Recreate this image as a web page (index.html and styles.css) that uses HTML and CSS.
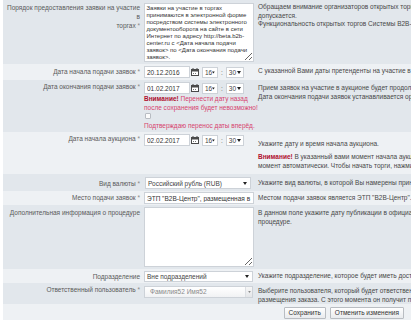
FILE: index.html
```html
<!DOCTYPE html>
<html lang="ru">
<head>
<meta charset="utf-8">
<link rel="stylesheet" href="styles.css">
</head>
<body>
<div class="form">
  <div class="row dark r1">
    <div class="label">Порядок предоставления заявки на участие в<br>торгах <span class="req">*</span></div>
    <div class="ctl"><textarea class="ta ta1">Заявки на участие в торгах
принимаются в электронной форме
посредством системы электронного
документооборота на сайте в сети
Интернет по адресу http://beta.b2b-
center.ru с &lt;Дата начала подачи
заявок&gt; по &lt;Дата окончания подачи
заявок&gt;.</textarea></div>
    <div class="help r1h">
      <div>Обращаем внимание организаторов открытых торгов, что изменение сроков</div>
      <div>допускается.</div>
      <div>Функциональность открытых торгов Системы B2B-Центр</div>
    </div>
  </div>

  <div class="row light r2">
    <div class="label">Дата начала подачи заявок <span class="req">*</span></div>
    <div class="ctl">
      <div class="datetime">
        <input class="inp date" type="text" value="20.12.2016">
        <svg class="cal" width="8" height="8" viewBox="0 0 8 8"><rect x="0.5" y="1.5" width="7" height="6" fill="#fff" stroke="#4a4a4a"/><rect x="0" y="1" width="8" height="2.5" fill="#4a4a4a"/><rect x="1.5" y="0" width="1" height="2" fill="#4a4a4a"/><rect x="5.5" y="0" width="1" height="2" fill="#4a4a4a"/><rect x="2" y="5" width="1" height="1" fill="#777"/><rect x="4" y="5" width="1" height="1" fill="#777"/></svg>
        <span class="sel small"><span>16</span><svg class="arr" width="4" height="3" viewBox="0 0 4 3"><path d="M0 0H4L2 3Z" fill="#222"/></svg></span>
        <span class="colon">:</span>
        <span class="sel small w30"><span>30</span><svg class="arr" width="4" height="3" viewBox="0 0 4 3"><path d="M0 0H4L2 3Z" fill="#222"/></svg></span>
      </div>
    </div>
    <div class="help"><div>С указанной Вами даты претенденты на участие в торгах могут</div></div>
  </div>

  <div class="row dark r3">
    <div class="label">Дата окончания подачи заявок <span class="req">*</span></div>
    <div class="ctl">
      <div class="datetime">
        <input class="inp date" type="text" value="01.02.2017">
        <svg class="cal" width="8" height="8" viewBox="0 0 8 8"><rect x="0.5" y="1.5" width="7" height="6" fill="#fff" stroke="#4a4a4a"/><rect x="0" y="1" width="8" height="2.5" fill="#4a4a4a"/><rect x="1.5" y="0" width="1" height="2" fill="#4a4a4a"/><rect x="5.5" y="0" width="1" height="2" fill="#4a4a4a"/><rect x="2" y="5" width="1" height="1" fill="#777"/><rect x="4" y="5" width="1" height="1" fill="#777"/></svg>
        <span class="sel small"><span>16</span><svg class="arr" width="4" height="3" viewBox="0 0 4 3"><path d="M0 0H4L2 3Z" fill="#222"/></svg></span>
        <span class="colon">:</span>
        <span class="sel small w30"><span>30</span><svg class="arr" width="4" height="3" viewBox="0 0 4 3"><path d="M0 0H4L2 3Z" fill="#222"/></svg></span>
      </div>
      <div class="warn"><b>Внимание!</b> Перенести дату назад<br>после сохранения будет невозможно!</div>
      <div class="chkline"><span class="chk"></span></div>
      <div class="warn">Подтверждаю перенос даты вперёд.</div>
    </div>
    <div class="help">
      <div>Прием заявок на участие в аукционе будет продолжаться до</div>
      <div>Дата окончания подачи заявок устанавливается организатором</div>
    </div>
  </div>

  <div class="row light r4">
    <div class="label">Дата начала аукциона <span class="req">*</span></div>
    <div class="ctl">
      <div class="datetime">
        <input class="inp date" type="text" value="02.02.2017">
        <svg class="cal" width="8" height="8" viewBox="0 0 8 8"><rect x="0.5" y="1.5" width="7" height="6" fill="#fff" stroke="#4a4a4a"/><rect x="0" y="1" width="8" height="2.5" fill="#4a4a4a"/><rect x="1.5" y="0" width="1" height="2" fill="#4a4a4a"/><rect x="5.5" y="0" width="1" height="2" fill="#4a4a4a"/><rect x="2" y="5" width="1" height="1" fill="#777"/><rect x="4" y="5" width="1" height="1" fill="#777"/></svg>
        <span class="sel small"><span>16</span><svg class="arr" width="4" height="3" viewBox="0 0 4 3"><path d="M0 0H4L2 3Z" fill="#222"/></svg></span>
        <span class="colon">:</span>
        <span class="sel small w30"><span>30</span><svg class="arr" width="4" height="3" viewBox="0 0 4 3"><path d="M0 0H4L2 3Z" fill="#222"/></svg></span>
      </div>
    </div>
    <div class="help r4h">
      <p>Укажите дату и время начала аукциона.</p>
      <p><b class="attn">Внимание!</b> В указанный вами момент начала аукциона торги не начнутся в этот</p>
      <p class="cont">момент автоматически. Чтобы начать торги, нажмите кнопку</p>
    </div>
  </div>

  <div class="row dark r5">
    <div class="label">Вид валюты <span class="req">*</span></div>
    <div class="ctl"><span class="sel wide"><span>Российский рубль (RUB)</span><svg class="arr" width="4" height="3" viewBox="0 0 4 3"><path d="M0 0H4L2 3Z" fill="#222"/></svg></span></div>
    <div class="help"><div>Укажите вид валюты, в которой Вы намерены принимать предложения</div></div>
  </div>

  <div class="row light r6">
    <div class="label">Место подачи заявок <span class="req">*</span></div>
    <div class="ctl"><input class="inp full" type="text" value="ЭТП &quot;B2B-Центр&quot;, размещенная в сети Интернет"></div>
    <div class="help"><div>Местом подачи заявок является ЭТП "B2B-Центр".</div></div>
  </div>

  <div class="row dark r7">
    <div class="label">Дополнительная информация о процедуре</div>
    <div class="ctl"><textarea class="ta ta2"></textarea></div>
    <div class="help">
      <div>В данном поле укажите дату публикации в официальном печатном издании</div>
      <div>процедуре.</div>
    </div>
  </div>

  <div class="row light r8">
    <div class="label">Подразделение</div>
    <div class="ctl"><span class="sel wide dept"><span>Вне подразделений</span><svg class="arr" width="4" height="3" viewBox="0 0 4 3"><path d="M0 0H4L2 3Z" fill="#222"/></svg></span></div>
    <div class="help"><div>Укажите подразделение, которое будет иметь доступ к процедуре</div></div>
  </div>

  <div class="row dark r9">
    <div class="label">Ответственный пользователь <span class="req">*</span></div>
    <div class="ctl"><span class="combo"><span class="combo-text">Фамилия52 Имя52</span><span class="combo-btn"><svg width="3" height="2" viewBox="0 0 4 3"><path d="M0 0H4L2 3Z" fill="#888"/></svg></span></span></div>
    <div class="help">
      <div>Выберите пользователя, который будет ответственным за проведение</div>
      <div>размещения заказа. С этого момента он получит права на процедуру</div>
    </div>
  </div>

  <div class="actions light">
    <button class="btn" type="button">Сохранить</button>
    <button class="btn" type="button">Отменить изменения</button>
  </div>
</div>
</body>
</html>
```
FILE: styles.css
```css
html, body {
  margin: 0;
  padding: 0;
  background: #fff;
  overflow: hidden;
}

body {
  width: 411px;
  height: 320px;
  font-family: "Liberation Sans", Arial, sans-serif;
  font-size: 6.5px;
  color: #444;
}

.form {
  margin-left: 3px;
}

.row {
  display: grid;
  grid-template-columns: 138px 114px minmax(0, 1fr);
}

.dark { background: #e2e7ec; }
.light { background: #eef1f4; }

.label {
  text-align: right;
  padding: 3px 1px 0 0;
  line-height: 9px;
  color: #5a5a5a;
}

.req { color: #888; }

.ctl {
  padding: 2px 0 2px 3px;
}

.help {
  padding: 3px 0 0 3px;
  line-height: 8.5px;
  white-space: nowrap;
  overflow: hidden;
  color: #484848;
}

.help p { margin: 0; }

/* text areas */
.ta {
  display: block;
  box-sizing: border-box;
  width: 110px;
  margin: 0;
  padding: 1px 1px 1px 1.5px;
  border: 1px solid #cdd2d8;
  background: #fff;
  font-family: "Liberation Sans", Arial, sans-serif;
  font-size: 6px;
  line-height: 7px;
  color: #333;
  white-space: pre;
  overflow: hidden;
  resize: both;
}

.r1 .ctl { padding: 3px 0 2px 3px; }
.ta1 { height: 59px; }
.ta2 { height: 60px; }

/* inputs */
.inp {
  box-sizing: border-box;
  height: 12px;
  margin: 0;
  padding: 0 2px;
  border: 1px solid #cdd2d8;
  background: #fff;
  font-family: "Liberation Sans", Arial, sans-serif;
  font-size: 6.5px;
  color: #333;
  outline: none;
}

.date { width: 46px; }
.full { width: 110px; display: block; }

.datetime {
  display: flex;
  align-items: center;
  height: 12px;
}

.cal {
  display: block;
  margin: 0 3px 0 1px;
}

.colon {
  margin: 0 3px;
  color: #666;
}

/* selects */
.sel {
  box-sizing: border-box;
  display: flex;
  align-items: center;
  justify-content: space-between;
  height: 11px;
  padding: 0 2px 0 2px;
  border: 1px solid #cdd2d8;
  background: #fff;
  color: #444;
}

.sel.small { width: 16px; }
.sel.w30 { width: 18px; }
.sel .arr { display: block; }

.sel.wide {
  width: 106px;
  height: 12px;
  margin-left: 1px;
  padding: 0 3px 0 2px;
}

.r5 .ctl { padding: 3px 0 2px 3px; }
.r5 .label, .r5 .help { padding-top: 4.5px; }

.r6 .ctl { padding: 1px 0 1px 3px; }
.r6 .label { padding-top: 1.5px; }
.r6 .help { padding-top: 2.5px; }

.r7 .help { line-height: 9px; }

.r8 .ctl { padding: 2px 0 1px 3px; }
.sel.dept { width: 109px; height: 11px; margin-left: 0; }
.r8 .label, .r8 .help { padding-top: 2.5px; }

/* warning block */
.warn {
  line-height: 9px;
  color: #d7426e;
  white-space: nowrap;
}

.warn b { color: #b0102e; }

.chkline {
  height: 8px;
  padding-left: 1px;
}

.chk {
  display: block;
  box-sizing: border-box;
  width: 6px;
  height: 6px;
  margin-top: 1px;
  border: 1px solid #b8bcc2;
  background: #fbfbfb;
  border-radius: 1px;
}

.r3 .label { padding-top: 2px; }
.r3 .help { padding-top: 2.5px; line-height: 9px; }

/* row 4 */
.r4 .label { padding-top: 2px; }
.r4h {
  padding: 3px 0 4px 3px;
  line-height: 9px;
}
.r4h p { margin-top: 4px; }
.r4h p.cont { margin-top: 0; }
.attn { color: #b0102e; }

/* combo */
.r9 .ctl { padding: 3px 0 2px 3px; }
.r9 .label { padding-top: 2px; }
.r9 .help { padding-top: 2.5px; line-height: 9px; }

.combo {
  box-sizing: border-box;
  display: flex;
  width: 109px;
  height: 12px;
  border: 1px solid #cdd2d8;
  background: linear-gradient(#ffffff, #f1f2f4);
}

.combo-text {
  flex: 1;
  padding: 0 0 0 5px;
  line-height: 10px;
  color: #8a8a8a;
}

.combo-btn {
  width: 6px;
  display: flex;
  align-items: center;
  justify-content: center;
  border-left: 1px solid #dcdfe3;
  background: linear-gradient(#f7f7f7, #e4e6e9);
}

/* actions */
.actions {
  display: flex;
  justify-content: flex-end;
  gap: 4px;
  padding: 3px 7px 3px 0;
  height: 17px;
  box-sizing: border-box;
}

.btn {
  box-sizing: border-box;
  height: 12px;
  margin: 0;
  padding: 0 4px;
  border: 1px solid #b9bdc2;
  border-radius: 1px;
  background: linear-gradient(#ffffff, #e9ebee);
  font-family: "Liberation Sans", Arial, sans-serif;
  font-size: 6.5px;
  color: #333;
  line-height: 10px;
}
```
